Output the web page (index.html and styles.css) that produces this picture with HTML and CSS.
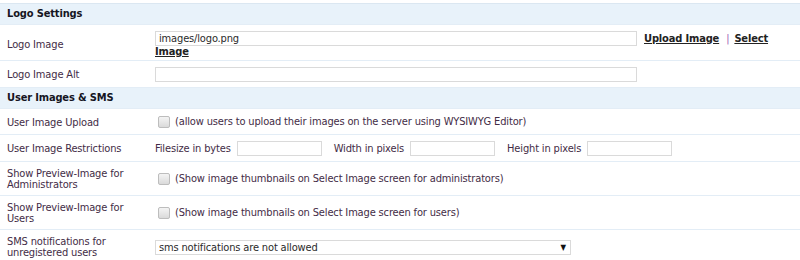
FILE: index.html
```html
<!DOCTYPE html>
<html lang="en">
<head>
    <meta charset="UTF-8">
    <title>Settings - Images</title>
    <link rel="stylesheet" href="styles.css">
</head>
<body>
    <table class="settings-table">
        <tr class="section-row">
            <th colspan="2">Logo Settings</th>
        </tr>
        <tr class="logo-row">
            <td class="label-cell">Logo Image</td>
            <td class="value-cell"><input type="text" class="text-input wide" value="images/logo.png"><a href="#" class="action-link first">Upload Image</a><span class="link-sep">|</span><a href="#" class="action-link">Select Image</a></td>
        </tr>
        <tr>
            <td class="label-cell">Logo Image Alt</td>
            <td class="value-cell">
                <input type="text" class="text-input wide">
            </td>
        </tr>
        <tr class="section-row">
            <th colspan="2">User Images &amp; SMS</th>
        </tr>
        <tr>
            <td class="label-cell">User Image Upload</td>
            <td class="value-cell">
                <span class="check"></span>(allow users to upload their images on the server using WYSIWYG Editor)
            </td>
        </tr>
        <tr>
            <td class="label-cell">User Image Restrictions</td>
            <td class="value-cell">
                <div class="restrictions">
                    <span>Filesize in bytes</span>
                    <input type="text" class="text-input small">
                    <span>Width in pixels</span>
                    <input type="text" class="text-input small">
                    <span>Height in pixels</span>
                    <input type="text" class="text-input small">
                </div>
            </td>
        </tr>
        <tr>
            <td class="label-cell">Show Preview-Image for Administrators</td>
            <td class="value-cell">
                <span class="check"></span>(Show image thumbnails on Select Image screen for administrators)
            </td>
        </tr>
        <tr>
            <td class="label-cell">Show Preview-Image for Users</td>
            <td class="value-cell">
                <span class="check"></span>(Show image thumbnails on Select Image screen for users)
            </td>
        </tr>
        <tr>
            <td class="label-cell">SMS notifications for unregistered users</td>
            <td class="value-cell">
                <div class="select-box">
                    <select class="select-input">
                        <option>sms notifications are not allowed</option>
                        <option>sms notifications are allowed</option>
                    </select>
                </div>
            </td>
        </tr>
    </table>
</body>
</html>
```

FILE: styles.css
```css
* {
    box-sizing: border-box;
}

body {
    margin: 0;
    padding-top: 3px;
    background-color: #ffffff;
    font-family: "DejaVu Sans Condensed", "DejaVu Sans", Verdana, sans-serif;
    font-size: 11px;
    line-height: 11px;
    letter-spacing: -0.15px;
    color: #432c46;
}

.settings-table {
    width: 100%;
    border-collapse: collapse;
}

.settings-table td,
.settings-table th {
    padding: 6px 7px 5px;
    border-bottom: 1px solid #e3edf6;
    text-align: left;
    vertical-align: middle;
}

.section-row th {
    background-color: #e8f2fa;
    border-top: 1px solid #dbe7f1;
    color: #15151f;
    font-weight: bold;
    padding: 4px 7px 5px;
}

.label-cell {
    width: 148px;
}

.logo-row td {
    padding-top: 6px;
    padding-bottom: 3px;
}

.text-input {
    height: 15px;
    margin: 0;
    padding: 0 3px;
    border: 1px solid #dadada;
    font-family: inherit;
    font-size: 11px;
    letter-spacing: inherit;
    color: #2a2a2a;
    vertical-align: middle;
}

.text-input.wide {
    width: 482px;
}

.text-input.small {
    width: 85px;
}

.action-link {
    color: #222222;
    font-weight: bold;
    text-decoration: underline;
}

.action-link.first {
    margin-left: 7px;
}

.link-sep {
    color: #9b5fb5;
    margin: 0 5px 0 7px;
}

.check {
    display: inline-block;
    width: 12px;
    height: 12px;
    margin: 1px 5px 1px 3px;
    border: 1px solid #bdbdbd;
    border-radius: 2px;
    background: linear-gradient(#f4f4f4, #dadada);
    vertical-align: middle;
}

.restrictions {
    display: flex;
    align-items: center;
}

.restrictions span {
    margin-right: 6px;
}

.restrictions input {
    margin-right: 12px;
}

.select-box {
    position: relative;
    width: 416px;
}

.select-input {
    display: block;
    width: 100%;
    height: 15px;
    padding: 0 3px;
    border: 1px solid #dadada;
    border-radius: 0;
    background: #ffffff;
    font-family: inherit;
    font-size: 11px;
    letter-spacing: inherit;
    line-height: 13px;
    color: #2a2a2a;
    -webkit-appearance: none;
    appearance: none;
}

.select-box::after {
    content: "\25BC";
    position: absolute;
    right: 5px;
    top: 3px;
    font-size: 8px;
    line-height: 9px;
    color: #111111;
    pointer-events: none;
}
```
